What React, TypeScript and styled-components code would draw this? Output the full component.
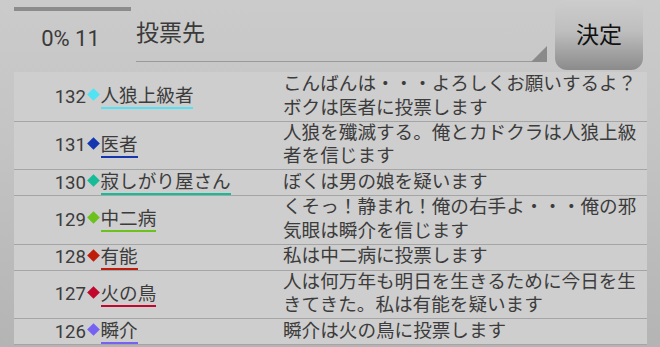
import React from 'react'
import styled, { createGlobalStyle } from 'styled-components'

const GlobalStyle = createGlobalStyle`
  html, body {
    margin: 0;
    padding: 0;
    background: #c4c4c4;
  }
  body {
    font-family: Roboto, "Noto Sans CJK JP", sans-serif;
  }
`

const Screen = styled.div`
  width: 660px;
  height: 347px;
  overflow: hidden;
  background: linear-gradient(#cbcbcb, #c4c4c4 40%, #b4b4b4);
`

const Header = styled.div`
  display: flex;
  height: 72px;
  padding-left: 14px;
`

const Counter = styled.div`
  width: 117px;
  display: flex;
  flex-direction: column;
  align-items: center;
`

const ProgressTrack = styled.div`
  align-self: stretch;
  height: 4px;
  margin-top: 7px;
  background: #8c8c8c;
`

const CounterText = styled.div`
  margin-top: 15px;
  font-size: 22px;
  line-height: 26px;
  color: #3a3a3a;
  padding-right: 4px;
`

const Spinner = styled.div`
  position: relative;
  width: 411px;
  height: 62px;
  margin-left: 5px;
  border-bottom: 1px solid #9a9a9a;
  box-sizing: border-box;
  padding-top: 20px;
  font-size: 23px;
  line-height: 28px;
  color: #3a3a3a;

  &::after {
    content: '';
    position: absolute;
    right: 0;
    bottom: -1px;
    width: 0;
    height: 0;
    border-left: 16px solid transparent;
    border-bottom: 16px solid #8a8a8a;
  }
`

const DecideButton = styled.button`
  width: 88px;
  height: 70px;
  margin-left: 8px;
  border: none;
  border-radius: 12px;
  background: linear-gradient(#cdcdcd, #bebebe 45%, #8b8b8b);
  font-family: Roboto, "Noto Sans CJK JP", sans-serif;
  font-size: 23px;
  color: #111;
  padding: 0;
  padding-bottom: 4px;
`

const List = styled.div`
  margin: 0 13px 0 14px;
  background: #cecece;
  padding-top: 1px;
`

const Row = styled.div`
  display: grid;
  grid-template-columns: 269px 1fr;
  align-items: center;
  border-bottom: 1px solid #a5a5a5;
`

const Speaker = styled.div`
  display: flex;
  align-items: center;
  min-height: 25px;
`

const Num = styled.span`
  width: 72px;
  text-align: right;
  font-size: 18.6px;
  line-height: 22px;
  color: #3c3c3c;
`

const Diamond = styled.span<{ $color: string }>`
  width: 9px;
  height: 9px;
  margin: 0 2.5px 4px 3px;
  background: ${(p) => p.$color};
  transform: rotate(45deg);
`

const Name = styled.span<{ $color: string }>`
  font-size: 18.6px;
  line-height: 22px;
  color: #3c3c3c;
  border-bottom: 2px solid ${(p) => p.$color};
  margin-top: 1px;
`

const Message = styled.div`
  font-size: 18.6px;
  line-height: 23.75px;
  color: #3c3c3c;
  padding-right: 4px;
`

const rows = [
  { no: 132, name: '人狼上級者', color: '#4fe3f3', text: 'こんばんは・・・よろしくお願いするよ？ボクは医者に投票します' },
  { no: 131, name: '医者', color: '#1437b0', text: '人狼を殲滅する。俺とカドクラは人狼上級者を信じます' },
  { no: 130, name: '寂しがり屋さん', color: '#16bb98', text: 'ぼくは男の娘を疑います' },
  { no: 129, name: '中二病', color: '#6cc11c', text: 'くそっ！静まれ！俺の右手よ・・・俺の邪気眼は瞬介を信じます' },
  { no: 128, name: '有能', color: '#bf1d0c', text: '私は中二病に投票します' },
  { no: 127, name: '火の鳥', color: '#c1082c', text: '人は何万年も明日を生きるために今日を生きてきた。私は有能を疑います' },
  { no: 126, name: '瞬介', color: '#7562f2', text: '瞬介は火の鳥に投票します' },
]

export default function App() {
  return (
    <Screen>
      <GlobalStyle />
      <Header>
        <Counter>
          <ProgressTrack />
          <CounterText>0% 11</CounterText>
        </Counter>
        <Spinner>投票先</Spinner>
        <DecideButton>決定</DecideButton>
      </Header>
      <List>
        {rows.map((r) => (
          <Row key={r.no}>
            <Speaker>
              <Num>{r.no}</Num>
              <Diamond $color={r.color} />
              <Name $color={r.color}>{r.name}</Name>
            </Speaker>
            <Message>{r.text}</Message>
          </Row>
        ))}
      </List>
    </Screen>
  )
}
